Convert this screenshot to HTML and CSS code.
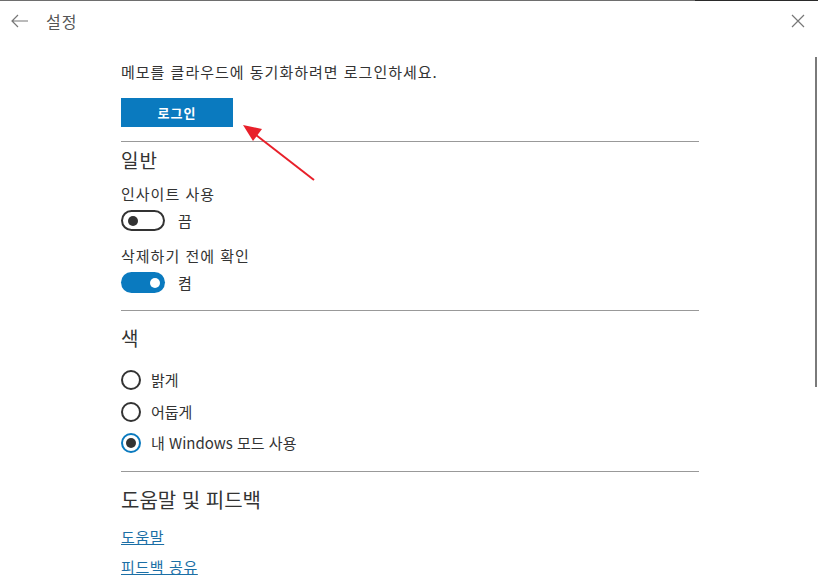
FILE: index.html
```html
<!DOCTYPE html>
<html lang="ko">
<head>
  <meta charset="UTF-8">
  <title>설정</title>
  <link rel="stylesheet" href="styles.css">
</head>
<body>
  <div class="topline"></div>
  <header class="titlebar">
    <div class="title-left">
      <svg class="back" width="18" height="14" viewBox="0 0 18 14"><path d="M1 7H17M7 1L1 7L7 13" fill="none" stroke="#777" stroke-width="1.2"/></svg>
      <span class="title">설정</span>
    </div>
    <svg class="close" width="14" height="14" viewBox="0 0 14 14"><path d="M1 1L13 13M13 1L1 13" fill="none" stroke="#777" stroke-width="1.2"/></svg>
  </header>

  <main class="content">
    <section class="section first">
      <p class="text">메모를 클라우드에 동기화하려면 로그인하세요.</p>
      <button class="btn">로그인</button>
    </section>

    <section class="section general">
      <h2 class="heading">일반</h2>
      <div class="setting">
        <p class="text">인사이트 사용</p>
        <div class="toggle-row">
          <span class="toggle off"><span class="knob"></span></span>
          <span class="toggle-label">끔</span>
        </div>
      </div>
      <div class="setting">
        <p class="text">삭제하기 전에 확인</p>
        <div class="toggle-row">
          <span class="toggle on"><span class="knob"></span></span>
          <span class="toggle-label">켬</span>
        </div>
      </div>
    </section>

    <section class="section colors">
      <h2 class="heading color-head">색</h2>
      <div class="radios">
        <div class="radio-row"><span class="radio"></span><span>밝게</span></div>
        <div class="radio-row"><span class="radio"></span><span>어둡게</span></div>
        <div class="radio-row"><span class="radio checked"></span><span>내 Windows 모드 사용</span></div>
      </div>
    </section>

    <section class="section last">
      <h2 class="heading big">도움말 및 피드백</h2>
      <a class="link" href="#">도움말</a>
      <a class="link" href="#">피드백 공유</a>
    </section>
  </main>

  <div class="scrollbar"></div>

  <svg class="arrow" width="818" height="578" viewBox="0 0 818 578">
    <line x1="314" y1="180" x2="256" y2="135" stroke="#e8202a" stroke-width="2"/>
    <polygon points="243,125 262,129 253,141" fill="#e8202a"/>
  </svg>
</body>
</html>
```

FILE: styles.css
```css
* {
  margin: 0;
  padding: 0;
  box-sizing: border-box;
}

body {
  width: 818px;
  height: 578px;
  overflow: hidden;
  background: #fff;
  color: #333;
  font-family: "Noto Sans CJK KR", "Noto Sans", sans-serif;
  position: relative;
}

.topline {
  height: 1px;
  background: linear-gradient(to right, #6e6e6e 0, #6e6e6e 85%, #2a2a2a 85%, #2a2a2a 100%);
}

.titlebar {
  height: 40px;
  display: flex;
  align-items: center;
  justify-content: space-between;
  padding: 0 13px 0 11px;
}

.title-left {
  display: flex;
  align-items: center;
  gap: 17px;
}

.title {
  font-size: 16px;
  letter-spacing: 1px;
  color: #555;
  line-height: 20px;
}

.content {
  width: 578px;
  margin-left: 121px;
}

.section {
  border-top: 1px solid #999;
  padding: 8px 0 18px;
}

.section.first {
  border-top: none;
  padding: 21px 0 14px;
}

.section.general {
  padding-bottom: 17px;
}

.text {
  font-size: 15px;
  letter-spacing: 1px;
  line-height: 20px;
}

.btn {
  margin-top: 16px;
  width: 112px;
  height: 29px;
  border: none;
  background: #0a7abf;
  color: #fff;
  font-family: inherit;
  font-size: 13px;
  letter-spacing: 1px;
  font-weight: bold;
}

.heading {
  font-size: 19px;
  letter-spacing: 1px;
  font-weight: normal;
  line-height: 20px;
  margin-bottom: 14px;
}

.setting {
  margin-bottom: 15px;
}

.setting:last-child {
  margin-bottom: 0;
}

.toggle-row {
  display: flex;
  align-items: center;
  gap: 13px;
  margin-top: 6px;
}

.toggle {
  width: 44px;
  height: 21px;
  border-radius: 11px;
  display: flex;
  align-items: center;
  padding: 0 5px;
}

.toggle.off {
  border: 2px solid #333;
}

.toggle.off .knob {
  width: 10px;
  height: 10px;
  border-radius: 50%;
  background: #333;
}

.toggle.on {
  background: #0a7abf;
  justify-content: flex-end;
}

.toggle.on .knob {
  width: 10px;
  height: 10px;
  border-radius: 50%;
  background: #fff;
}

.toggle-label {
  font-size: 15px;
  line-height: 20px;
}

.color-head {
  margin-top: 9px;
  margin-bottom: 22px;
}

.radios {
  display: flex;
  flex-direction: column;
  gap: 11.5px;
}

.radio-row {
  display: flex;
  align-items: center;
  gap: 10px;
  font-size: 15px;
  line-height: 20px;
}

.radio {
  width: 20px;
  height: 20px;
  border: 2px solid #333;
  border-radius: 50%;
  display: flex;
  align-items: center;
  justify-content: center;
}

.radio.checked {
  border-color: #0a7abf;
}

.radio.checked::after {
  content: "";
  width: 10px;
  height: 10px;
  border-radius: 50%;
  background: #333;
}

.section.colors {
  padding-bottom: 18px;
}

.section.last {
  padding-top: 16px;
}

.heading.big {
  font-size: 20px;
  letter-spacing: 0;
  line-height: 24px;
  margin-bottom: 15px;
}

.link {
  display: block;
  font-size: 15px;
  letter-spacing: 0.6px;
  line-height: 20px;
  color: #1b6fa6;
  margin-bottom: 10px;
}

.scrollbar {
  position: absolute;
  right: 1px;
  top: 57px;
  width: 2px;
  height: 330px;
  background: #7a7a7a;
}

.arrow {
  position: absolute;
  left: 0;
  top: 0;
  pointer-events: none;
}
```
